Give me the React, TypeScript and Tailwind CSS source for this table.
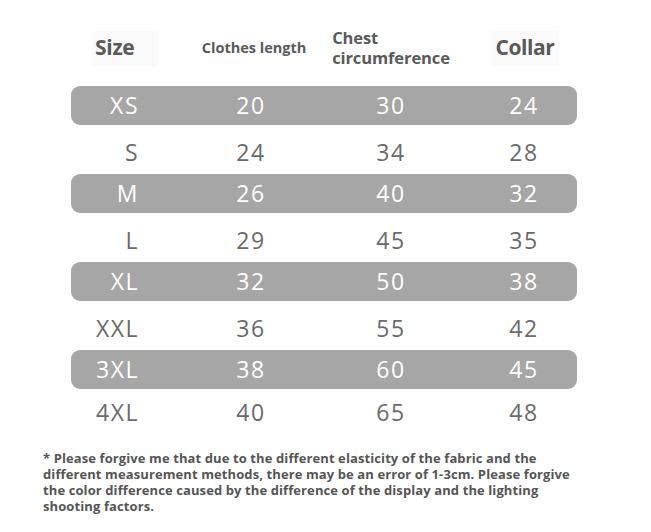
const rows = [
  { size: "XS", length: "20", chest: "30", collar: "24", shaded: true },
  { size: "S", length: "24", chest: "34", collar: "28", shaded: false },
  { size: "M", length: "26", chest: "40", collar: "32", shaded: true },
  { size: "L", length: "29", chest: "45", collar: "35", shaded: false },
  { size: "XL", length: "32", chest: "50", collar: "38", shaded: true },
  { size: "XXL", length: "36", chest: "55", collar: "42", shaded: false },
  { size: "3XL", length: "38", chest: "60", collar: "45", shaded: true },
  { size: "4XL", length: "40", chest: "65", collar: "48", shaded: false, last: true },
];

const font = { fontFamily: '"Open Sans", "Liberation Sans", sans-serif' };

export default function App() {
  return (
    <div className="w-[651px] h-[532px] bg-white overflow-hidden" style={font}>
      <div className="pt-[27px] pl-[71px] w-[577px]">
        {/* header */}
        <div className="grid grid-cols-[130px_100px_180px_96px] h-[42px] items-center text-[#5a5a5a] font-bold">
          <div className="flex justify-start pl-[21px]">
            <div className="bg-[#fafafa] h-[35px] w-[66px] flex items-center pl-[3px] text-[21px] tracking-[-0.3px]">
              Size
            </div>
          </div>
          <div className="flex justify-center text-[14.5px] whitespace-nowrap pl-[6px]">
            Clothes length
          </div>
          <div className="flex justify-center">
            <div className="text-[16.5px] leading-[20px] text-left tracking-[-0.1px]">
              <div>Chest</div>
              <div>circumference</div>
            </div>
          </div>
          <div className="flex justify-center pr-[8px]">
            <div className="bg-[#fafafa] h-[35px] px-[4px] flex items-center text-[21px] tracking-[-0.4px]">
              Collar
            </div>
          </div>
        </div>

        {/* rows */}
        <div className="mt-[17px] flex flex-col">
          {rows.map((r) => (
            <div
              key={r.size}
              className={
                r.shaded
                  ? "grid grid-cols-[130px_100px_180px_96px] h-[39px] items-center rounded-[9px] bg-[#a6a6a6] text-white text-[23px] tracking-[1.5px]"
                  : r.last
                    ? "grid grid-cols-[130px_100px_180px_96px] h-[46px] items-center text-[#6a6a6a] text-[23px] tracking-[1.5px]"
                    : "grid grid-cols-[130px_100px_180px_96px] h-[49px] items-center pt-[6px] text-[#6a6a6a] text-[23px] tracking-[1.5px]"
              }
            >
              <div className="text-right pr-[62px]">{r.size}</div>
              <div className="text-center">{r.length}</div>
              <div className="text-center">{r.chest}</div>
              <div className="text-center pr-[10px]">{r.collar}</div>
            </div>
          ))}
        </div>
      </div>

      {/* note */}
      <div className="mt-[15px] ml-[43px] w-[545px] text-[13px] leading-[16px] font-bold text-[#555555] tracking-[0.1px]">
        * Please forgive me that due to the different elasticity of the fabric and the different measurement methods, there may be an error of 1-3cm. Please forgive the color difference caused by the difference of the display and the lighting shooting factors.
      </div>
    </div>
  );
}
